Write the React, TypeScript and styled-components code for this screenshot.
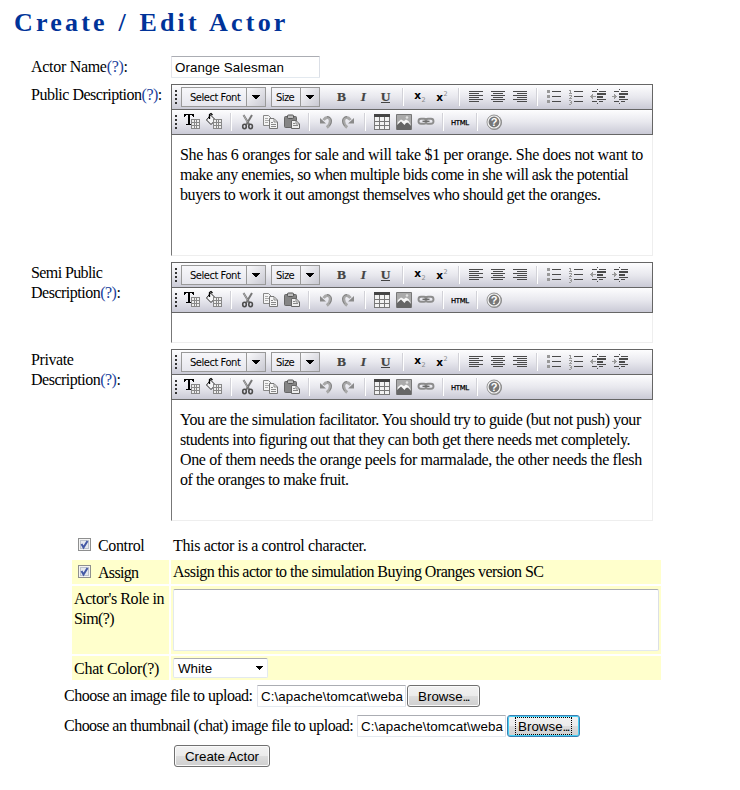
import React from "react";
import styled, { createGlobalStyle } from "styled-components";

const Global = createGlobalStyle`
  *, *::before, *::after { box-sizing: border-box; }
  body { margin: 0; background: #fff; color: #000; font: 16px/20px "Liberation Serif", serif; }
`;

const Page = styled.main`
  width: 740px;
  height: 790px;
  padding-top: 8px;
  overflow: hidden;
`;

const Title = styled.h1`
  margin: 0 0 18px 14px;
  height: 30px;
  font: bold 26px/30px "Liberation Serif", serif;
  letter-spacing: 3.2px;
  word-spacing: 0.9px;
  color: #003399;
  white-space: nowrap;
`;

const Fields = styled.div`
  display: grid;
  grid-template-columns: 140px 482px;
  margin-left: 31px;
  row-gap: 6px;
`;

const FieldLabel = styled.div`
  padding-top: 1px;
  white-space: nowrap;
`;

const Help = styled.span`
  color: #1c3f9c;
`;

const Line = styled.span<{ $track?: number }>`
  display: block;
  white-space: nowrap;
  letter-spacing: ${(p) => p.$track ?? 0}px;
`;

const TextField = styled.input`
  display: block;
  width: ${(p) => p.width}px;
  height: 22px;
  padding: 1px 1px 0 3px;
  border: 1px solid #e3e9ef;
  border-top-color: #abadb3;
  border-left-color: #e2e3ea;
  border-right-color: #dbdfe6;
  border-radius: 1px;
  background: #fff;
  color: #000;
  font: 13.33px "Liberation Sans", sans-serif;
  letter-spacing: 0.1px;
  outline: 0;
`;

const EditorFrame = styled.section<{ $height: number }>`
  display: flex;
  flex-direction: column;
  height: ${(p) => p.$height}px;
  width: 482px;
`;

const ToolRow = styled.div<{ $first?: boolean }>`
  display: flex;
  align-items: center;
  flex: none;
  height: ${(p) => (p.$first ? 26 : 25)}px;
  border: 1px solid #666;
  border-top-width: ${(p) => (p.$first ? 1 : 0)}px;
  background: linear-gradient(#fdfdfe, #e8e8ee 50%, #cacad6);
`;

const EditorBody = styled.div`
  flex: 1;
  padding: 10px 0 0 8px;
  border: 1px solid #eee;
  border-top: 0;
  border-left-color: #777;
  color: #000;
`;

const Grip = styled.span`
  flex: none;
  width: 2px;
  height: 14px;
  margin: 0 4px 0 3px;
  background: repeating-linear-gradient(#333 0 2px, transparent 2px 4px);
`;

const Combo = styled.span<{ $w: number }>`
  display: flex;
  flex: none;
  width: ${(p) => p.$w}px;
  height: 20px;
  margin-right: 5px;
  border: 1px solid #999;
  background: linear-gradient(#f7f7fa, #e6e6ed);
`;

const ComboText = styled.span<{ $left: number; $track: number }>`
  flex: 1;
  padding-left: ${(p) => p.$left}px;
  font: 10px/19px "DejaVu Sans", sans-serif;
  letter-spacing: ${(p) => p.$track}px;
  white-space: nowrap;
`;

const ComboArrow = styled.span`
  display: grid;
  place-items: center;
  width: 19px;
  border-left: 1px solid #999;
  background: linear-gradient(135deg, #fafafc, #c9c9d2);
`;

const Cell = styled.span`
  display: block;
  flex: none;
  width: 22px;
  height: 24px;
`;

const Spacer = styled.span`
  flex: none;
  width: 6px;
`;

const Divider = styled.span`
  flex: none;
  width: 2px;
  height: 18px;
  margin: 0 5px;
  border-left: 1px solid #d2d2d8;
  border-right: 1px solid #fff;
`;

const Options = styled.div`
  display: grid;
  grid-template-columns: 97px 490px;
  grid-template-rows: 24px 24px 68px 24px;
  gap: 2px;
  margin: 13px 0 0 72px;
`;

const OptionCell = styled.div<{ $shaded?: boolean; $top?: number }>`
  padding: ${(p) => p.$top ?? 2}px 2px 0;
  background: ${(p) => (p.$shaded ? "#ffffcc" : "transparent")};
`;

const CheckLabel = styled.label`
  display: flex;
  padding-left: 4px;
`;

const CheckBox = styled.svg`
  margin: 2px 7px 0 0;
`;

const RoleBox = styled.textarea`
  display: block;
  width: 486px;
  height: 62px;
  border: 1px solid #e3e9ef;
  border-top-color: #abadb3;
  border-right-color: #dbdfe6;
  border-radius: 2px;
  background: #fff;
  resize: none;
`;

const ColorSelect = styled.div`
  display: flex;
  align-items: center;
  justify-content: space-between;
  width: 95px;
  height: 20px;
  padding: 0 4px;
  border: 1px solid #e3e9ef;
  border-top-color: #abadb3;
  border-radius: 2px;
  background: #fff;
  font: 13.33px "Liberation Sans", sans-serif;
`;

const UploadRow = styled.div`
  display: flex;
  height: 22px;
  margin: 5px 0 8px 64px;
`;

const UploadLabel = styled.span<{ $w: number }>`
  width: ${(p) => p.$w}px;
  padding-top: 1px;
`;

const Button = styled.button<{ $w: number; $gap?: number; $focused?: boolean }>`
  display: flex;
  align-items: center;
  justify-content: center;
  width: ${(p) => p.$w}px;
  height: 22px;
  margin: 0 0 0 ${(p) => p.$gap ?? 0}px;
  padding: 1px 0 0;
  border: 1px solid ${(p) => (p.$focused ? "#3c7fb1" : "#707070")};
  border-radius: 3px;
  background: linear-gradient(#f2f2f2, #ebebeb 50%, #dddddd 50%, #cfcfcf);
  box-shadow: inset 0 0 0 1px ${(p) => (p.$focused ? "#46d0f5" : "#fafafa")};
  color: #000;
  font: 13.33px "Liberation Sans", sans-serif;
  white-space: nowrap;
`;

const FocusRing = styled.span`
  height: 18px;
  margin-top: -1px;
  padding: 1px 2px 0;
  border: 1px dotted #000;
  line-height: 16px;
`;

const Dots = styled.span`
  letter-spacing: -1.6px;
`;

const SubmitRow = styled.div`
  margin-left: 174px;
`;

const Arrow = ({ wide }: { wide?: boolean }) => (
  <svg width={wide ? 8 : 7} height="4" viewBox={wide ? "0 0 8 4" : "0 0 7 4"} shapeRendering="crispEdges">
    <path
      d={wide ? "M0 0h8v1H7v1H6v1H5v1H3V3H2V2H1V1H0z" : "M0 0h7v1H6v1H5v1H4v1H3V3H2V2H1V1H0z"}
      fill="#000"
    />
  </svg>
);

const Icon = ({ children, crisp }: { children: React.ReactNode; crisp?: boolean }) => (
  <Cell>
    <svg width="22" height="24" viewBox="0 0 22 24" fill="none" shapeRendering={crisp ? "crispEdges" : "auto"}>
      {children}
    </svg>
  </Cell>
);

const Glyph = ({ char, variant }: { char: string; variant?: "italic" | "underline" }) => (
  <Icon>
    <text
      x="10.5"
      y="16"
      textAnchor="middle"
      fill="#444"
      stroke="#444"
      strokeWidth="0.2"
      fontFamily="Liberation Serif"
      fontWeight="bold"
      fontSize="13.5"
      fontStyle={variant === "italic" ? "italic" : undefined}
    >
      {char}
    </text>
    {variant === "underline" && <path d="M6 17.5h9" stroke="#444" />}
  </Icon>
);

const Script = ({ y, two }: { y: number; two: number }) => (
  <Icon>
    <text x="5.3" y={y} fill="#000" fontFamily="DejaVu Sans" fontWeight="bold" fontSize="10.5">x</text>
    <text x="12.5" y={two} fill="#888" fontFamily="DejaVu Sans" fontSize="6.5">2</text>
  </Icon>
);

const Align = ({ side }: { side: "left" | "center" | "right" }) => {
  const x = { left: 4, center: 6, right: 8 }[side];
  return (
    <Icon crisp>
      <path d="M4 6.5h14M4 10.5h14M4 14.5h14" stroke="#4a4a4a" />
      <path d={`M${x} 8.5h10M${x} 12.5h10M${x} 16.5h10`} stroke="#4a4a4a" />
    </Icon>
  );
};

const Bullets = () => (
  <Icon crisp>
    <path d="M4 5h3v3H4zM4 10h3v3H4zM4 15h3v3H4z" fill="#999" />
    <path d="M9 6.5h9M9 11.5h9M9 16.5h9" stroke="#4a4a4a" />
  </Icon>
);

const Numbers = () => (
  <Icon crisp>
    <path d="M4 5.5h1M5.5 5v3M4 8.5h3M4 10.5h2M6.5 10v2M5 12.5h1M4 13.5h3M4 15.5h2M5 17.5h1M6.5 16v3M4 19.5h2" stroke="#999" />
    <path d="M9 6.5h9M9 11.5h9M9 16.5h9" stroke="#4a4a4a" />
  </Icon>
);

const Indent = ({ out }: { out?: boolean }) => (
  <Icon crisp>
    <path d="M5 6.5h5M12 6.5h7M5 16.5h5M12 16.5h4" stroke="#4a4a4a" />
    <path d="M10 8h9v2h-9zM10 11h6v2h-6zM10 14h9v1h-9z" fill="#4a4a4a" />
    <path d="M10.5 4v1M10.5 18v1" stroke="#4a4a4a" />
    <path d={out ? "M3 11h1v-1h1V9h1v2h3v1H6v2H5v-1H4v-1H3z" : "M3 11h2V9h1v1h1v1h1v1H7v1H6v1H5v-2H3z"} fill="#999" />
  </Icon>
);

const MiniGrid = () => (
  <g>
    <path d="M10 9h9v10h-9z" fill="#888" />
    <path d="M11 10h2v2h-2zM14 10h1v2h-1zM16 10h2v2h-2zM11 13h2v2h-2zM14 13h1v2h-1zM16 13h2v2h-2zM11 16h2v2h-2zM14 16h1v2h-1zM16 16h2v2h-2z" fill="#eee" />
  </g>
);

const TextColor = () => (
  <Icon crisp>
    <path d="M3 4h10v3h-1V6h-1V5H9v9h2v1H5v-1h2V5H5v1H4v1H3z" fill="#000" />
    <MiniGrid />
  </Icon>
);

const FillColor = () => (
  <Icon>
    <path d="M7.5 5l5 5-4.500 4.500L3.500 10z" fill="#f5f5f7" stroke="#222" />
    <path d="M6.500 9V4.500L8 3.500 9.500 5M12.500 9v4" stroke="#000" strokeWidth="1.300" />
    <MiniGrid />
  </Icon>
);

const Cut = () => (
  <Icon>
    <path d="M6.5 5l6 10M15 5L9 15" stroke="#777" strokeWidth="2" />
    <path d="M6.5 5l4 7" stroke="#aaa" strokeWidth="1" />
    <ellipse cx="7.5" cy="16.5" rx="1.8" ry="2.2" stroke="#4d4d4d" strokeWidth="1.6" />
    <ellipse cx="13.6" cy="16.5" rx="1.8" ry="2.2" stroke="#4d4d4d" strokeWidth="1.6" />
  </Icon>
);

const Copy = () => (
  <Icon>
    <path d="M4.5 5.5h5l3 3v7h-8z" fill="#f4f4f4" stroke="#888" />
    <path d="M6 8.5h3M6 10.5h5M6 12.5h3" stroke="#aaa" />
    <path d="M10.5 8.5h4.500l3.500 3.500v6.500h-8z" fill="#f4f4f4" stroke="#777" />
    <path d="M15 9v3h3M12 12.5h2M12 14.5h5M12 16.5h5" stroke="#888" />
  </Icon>
);

const Paste = () => (
  <Icon>
    <rect x="3.5" y="6.5" width="12" height="11" rx="1" fill="#858585" stroke="#666" />
    <rect x="6.5" y="5" width="6" height="3.500" rx="1" fill="#bbb" stroke="#555" />
    <path d="M10.5 10.5h4.500l3.500 3.500v4.500h-8z" fill="#eee" stroke="#666" />
    <path d="M12 13.5h2M12 15.5h5M15 11v3h3" stroke="#888" />
  </Icon>
);

const Undo = ({ flip }: { flip?: boolean }) => (
  <Icon>
    <g transform={flip ? "translate(22 0) scale(-1 1)" : undefined}>
      <path d="M8.500 10C11 6.500 15 6.500 15.300 11c.2 3-1.500 5-3.500 6.500" stroke="#a8a8a8" strokeWidth="3" />
      <path d="M12 6.700c4.500 0 6 5 2.500 9" stroke="#777" strokeWidth="0.9" />
      <path d="M5 8v5.500h6z" fill="#8a8a8a" />
    </g>
  </Icon>
);

const Table = () => (
  <Icon crisp>
    <path d="M3 4h16v16H3z" fill="#777" />
    <path d="M3 4h16v3H3z" fill="#444" />
    <path d="M4 7h4v4H4zM9 7h4v4H9zM14 7h4v4h-4zM4 12h4v3H4zM9 12h4v3H9zM14 12h4v3h-4zM4 16h4v3H4zM9 16h4v3H9zM14 16h4v3h-4z" fill="#f2f2f2" />
  </Icon>
);

const Picture = () => (
  <Icon>
    <path d="M3.500 4.500h15v15h-15z" fill="#aaa" stroke="#777" />
    <path d="M4 17v-3l4-4 3 3 2-2 5 5v4H4z" fill="#666" />
    <path d="M4 15l1-3 3-2.500 3 1.500 2-1.500 2.500 1.500 2.500 4-3-2.500-2 .5-1.500 2-3.500-3.500z" fill="#f8f8f8" />
    <circle cx="14" cy="7.500" r="1.300" fill="#e0e0e0" />
  </Icon>
);

const Link = () => (
  <Icon>
    <rect x="3.500" y="8.800" width="8" height="5" rx="2.500" stroke="#8c8c8c" strokeWidth="1.900" />
    <rect x="10.500" y="8.800" width="8" height="5" rx="2.500" stroke="#8c8c8c" strokeWidth="1.900" />
    <path d="M7.500 11.300h7" stroke="#6c6c6c" strokeWidth="1.400" />
  </Icon>
);

const Html = () => (
  <Icon>
    <text
      x="2"
      y="15"
      fill="#000"
      stroke="#000"
      strokeWidth="0.25"
      fontFamily="DejaVu Sans"
      fontSize="6.8"
      textLength="18"
    >
      HTML
    </text>
  </Icon>
);

const Question = () => (
  <Icon>
    <circle cx="11.500" cy="12.500" r="7.500" fill="#888" />
    <circle cx="11" cy="12" r="7" fill="#777" stroke="#999" />
    <circle cx="11" cy="12" r="6" fill="#777" stroke="#f5f5f5" strokeWidth="1.200" />
    <text x="11" y="16" textAnchor="middle" fill="#fff" fontFamily="Liberation Sans" fontWeight="bold" fontSize="11">?</text>
  </Icon>
);

const Toolbar = () => (
  <>
    <ToolRow $first>
      <Grip />
      <Combo $w={85}>
        <ComboText $left={8} $track={-0.5}>Select Font</ComboText>
        <ComboArrow><Arrow wide /></ComboArrow>
      </Combo>
      <Combo $w={49}>
        <ComboText $left={4} $track={-0.6}>Size</ComboText>
        <ComboArrow><Arrow wide /></ComboArrow>
      </Combo>
      <Spacer />
      <Glyph char="B" />
      <Glyph char="I" variant="italic" />
      <Glyph char="U" variant="underline" />
      <Divider />
      <Script y={14} two={17} />
      <Script y={16} two={11} />
      <Divider />
      <Align side="left" />
      <Align side="center" />
      <Align side="right" />
      <Divider />
      <Bullets />
      <Numbers />
      <Indent out />
      <Indent />
    </ToolRow>
    <ToolRow>
      <Grip />
      <TextColor />
      <FillColor />
      <Divider />
      <Cut />
      <Copy />
      <Paste />
      <Divider />
      <Undo />
      <Undo flip />
      <Divider />
      <Table />
      <Picture />
      <Link />
      <Divider />
      <Html />
      <Divider />
      <Question />
    </ToolRow>
  </>
);

type TextLine = [text: string, track: number];

const Editor = ({ height, lines = [] }: { height: number; lines?: TextLine[] }) => (
  <EditorFrame $height={height}>
    <Toolbar />
    <EditorBody>
      {lines.map(([text, track]) => (
        <Line key={text} $track={track}>{text}</Line>
      ))}
    </EditorBody>
  </EditorFrame>
);

const Check = () => (
  <CheckBox width="13" height="13" viewBox="0 0 13 13">
    <rect x="0.5" y="0.5" width="12" height="12" fill="#f4f4f4" stroke="#8e8f8f" />
    <rect x="2.5" y="2.5" width="8" height="8" fill="#e6e9ee" stroke="#bcc2cc" />
    <path d="M3.5 6l2 3.500L9.500 3" fill="none" stroke="#4459a5" strokeWidth="2" />
  </CheckBox>
);

const publicText: TextLine[] = [
  ["She has 6 oranges for sale and will take $1 per orange. She does not want to", -0.31],
  ["make any enemies, so when multiple bids come in she will ask the potential", -0.5],
  ["buyers to work it out amongst themselves who should get the oranges.", -0.43],
];

const privateText: TextLine[] = [
  ["You are the simulation facilitator. You should try to guide (but not push) your", -0.43],
  ["students into figuring out that they can both get there needs met completely.", -0.46],
  ["One of them needs the orange peels for marmalade, the other needs the flesh", -0.37],
  ["of the oranges to make fruit.", -0.44],
];

export default function App() {
  const path = "C:\\apache\\tomcat\\weba";
  return (
    <Page>
      <Global />
      <Title>Create / Edit Actor</Title>
      <Fields>
        <FieldLabel><Line $track={-0.3}>Actor Name<Help>(?)</Help>:</Line></FieldLabel>
        <TextField width={149} defaultValue="Orange Salesman" />
        <FieldLabel><Line $track={-0.5}>Public Description<Help>(?)</Help>:</Line></FieldLabel>
        <Editor height={172} lines={publicText} />
        <FieldLabel>
          <Line $track={-0.6}>Semi Public</Line>
          <Line $track={-0.5}>Description<Help>(?)</Help>:</Line>
        </FieldLabel>
        <Editor height={81} />
        <FieldLabel>
          <Line $track={-0.4}>Private</Line>
          <Line $track={-0.5}>Description<Help>(?)</Help>:</Line>
        </FieldLabel>
        <Editor height={172} lines={privateText} />
      </Fields>
      <Options>
        <OptionCell><CheckLabel><Check /><Line $track={-0.35}>Control</Line></CheckLabel></OptionCell>
        <OptionCell><Line $track={-0.35}>This actor is a control character.</Line></OptionCell>
        <OptionCell $shaded $top={3}><CheckLabel><Check /><Line $track={-0.7}>Assign</Line></CheckLabel></OptionCell>
        <OptionCell $shaded>
          <Line $track={-0.52}>Assign this actor to the simulation Buying Oranges version SC</Line>
        </OptionCell>
        <OptionCell $shaded $top={3}>
          <Line $track={-0.4}>Actor's Role in</Line>
          <Line $track={-0.6}>Sim(?)</Line>
        </OptionCell>
        <OptionCell $shaded $top={3}><RoleBox /></OptionCell>
        <OptionCell $shaded $top={3}><Line $track={-0.25}>Chat Color(?)</Line></OptionCell>
        <OptionCell $shaded><ColorSelect>White<Arrow /></ColorSelect></OptionCell>
      </Options>
      <UploadRow>
        <UploadLabel $w={193}><Line $track={-0.5}>Choose an image file to upload:</Line></UploadLabel>
        <TextField width={149} readOnly value={path} />
        <Button $w={73} $gap={1}>Browse<Dots>...</Dots></Button>
      </UploadRow>
      <UploadRow>
        <UploadLabel $w={293}><Line $track={-0.52}>Choose an thumbnail (chat) image file to upload:</Line></UploadLabel>
        <TextField width={149} readOnly value={path} />
        <Button $w={73} $gap={1} $focused><FocusRing>Browse<Dots>...</Dots></FocusRing></Button>
      </UploadRow>
      <SubmitRow>
        <Button $w={96}>Create Actor</Button>
      </SubmitRow>
    </Page>
  );
}
